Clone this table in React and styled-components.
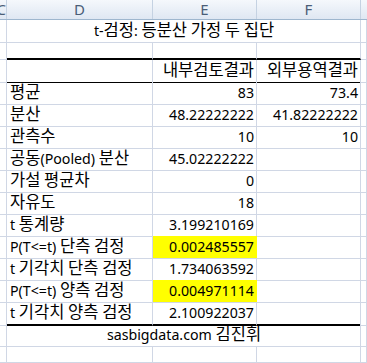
import styled, { createGlobalStyle } from "styled-components";

const GlobalStyle = createGlobalStyle`
  body {
    margin: 0;
    background: #fff;
    font-family: "Noto Sans", "Noto Sans CJK KR", sans-serif;
  }
`;

const cols = "7px 146px 104px 104px 1fr";

const Sheet = styled.div`
  width: 367px;
  height: 363px;
  overflow: hidden;
  display: flex;
  flex-direction: column;
`;

const HeaderRow = styled.div`
  display: grid;
  grid-template-columns: ${cols};
  height: 25px;
  background: linear-gradient(#f5f8fc, #dfe7f2);
  border-bottom: 1px solid #9eb6ce;
  box-sizing: border-box;
`;

const ColHead = styled.div`
  border-right: 1px solid #c5d2e2;
  color: #4a5d77;
  font-size: 15px;
  display: flex;
  align-items: center;
  justify-content: ${(p) => (p.$clip ? "flex-end" : "center")};
  overflow: hidden;
  line-height: 18px;
  &:last-child {
    border-right: none;
  }
`;

const Row = styled.div`
  display: grid;
  grid-template-columns: ${cols};
  height: ${(p) => p.$h || 22}px;
`;

const Cell = styled.div`
  box-sizing: border-box;
  min-width: 0;
  grid-column: ${(p) => (p.$span ? `span ${p.$span}` : "auto")};
  border-right: 1px solid ${(p) => (p.$fill ? p.$fill : "#d0d7e5")};
  border-bottom: ${(p) =>
    p.$bottom === "thick"
      ? "2px solid #000"
      : p.$bottom === "thin"
      ? "1px solid #000"
      : "1px solid #d0d7e5"};
  background: ${(p) => p.$fill || "transparent"};
  display: flex;
  align-items: flex-end;
  justify-content: ${(p) =>
    p.$align === "right" ? "flex-end" : p.$align === "center" ? "center" : "flex-start"};
  padding: 0 2px 1px 3px;
  font-size: 14.2px;
  line-height: 20px;
  color: #000;
  white-space: pre;
`;

const Line = styled.span`
  white-space: pre;
  line-height: 20px;
`;

const Ko = styled.span`
  font-size: 16.5px;
  line-height: 20px;
`;

function Txt({ children }) {
  if (!children) return null;
  return (
    <Line>
      {children
        .split(/([\uAC00-\uD7A3]+)/)
        .filter(Boolean)
        .map((part, i) =>
          /[\uAC00-\uD7A3]/.test(part) ? <Ko key={i}>{part}</Ko> : part
        )}
    </Line>
  );
}

const rows = [
  ["평균", "83", "73.4"],
  ["분산", "48.22222222", "41.82222222"],
  ["관측수", "10", "10"],
  ["공동(Pooled) 분산", "45.02222222", ""],
  ["가설 평균차", "0", ""],
  ["자유도", "18", ""],
  ["t 통계량", "3.199210169", ""],
  ["P(T<=t) 단측 검정", "0.002485557", "", true],
  ["t 기각치 단측 검정", "1.734063592", ""],
  ["P(T<=t) 양측 검정", "0.004971114", "", true],
  ["t 기각치 양측 검정", "2.100922037", ""],
];

export default function App() {
  return (
    <>
      <GlobalStyle />
      <Sheet>
        <HeaderRow>
          <ColHead $clip>C</ColHead>
          <ColHead>D</ColHead>
          <ColHead>E</ColHead>
          <ColHead>F</ColHead>
          <ColHead />
        </HeaderRow>

        <Row>
          <Cell />
          <Cell $span={3} $align="center">
            <Txt>t-검정: 등분산 가정 두 집단</Txt>
          </Cell>
          <Cell />
        </Row>

        <Row $h={23}>
          <Cell />
          <Cell $bottom="thick" />
          <Cell $bottom="thick" />
          <Cell $bottom="thick" />
          <Cell />
        </Row>

        <Row>
          <Cell />
          <Cell $bottom="thin" />
          <Cell $bottom="thin" $align="right">
            <Txt>내부검토결과</Txt>
          </Cell>
          <Cell $bottom="thin" $align="right">
            <Txt>외부용역결과</Txt>
          </Cell>
          <Cell />
        </Row>

        {rows.map(([label, e, f, hi], i) => {
          const last = i === rows.length - 1;
          return (
            <Row key={label}>
              <Cell />
              <Cell $bottom={last ? "thick" : undefined}>
                <Txt>{label}</Txt>
              </Cell>
              <Cell
                $align="right"
                $fill={hi ? "#ffff00" : undefined}
                $bottom={last ? "thick" : undefined}
              >
                {e}
              </Cell>
              <Cell $align="right" $bottom={last ? "thick" : undefined}>
                {f}
              </Cell>
              <Cell />
            </Row>
          );
        })}

        <Row>
          <Cell />
          <Cell $span={3} $align="center">
            <Txt>sasbigdata.com 김진휘</Txt>
          </Cell>
          <Cell />
        </Row>

        <Row>
          <Cell />
          <Cell />
          <Cell />
          <Cell />
          <Cell />
        </Row>
      </Sheet>
    </>
  );
}
